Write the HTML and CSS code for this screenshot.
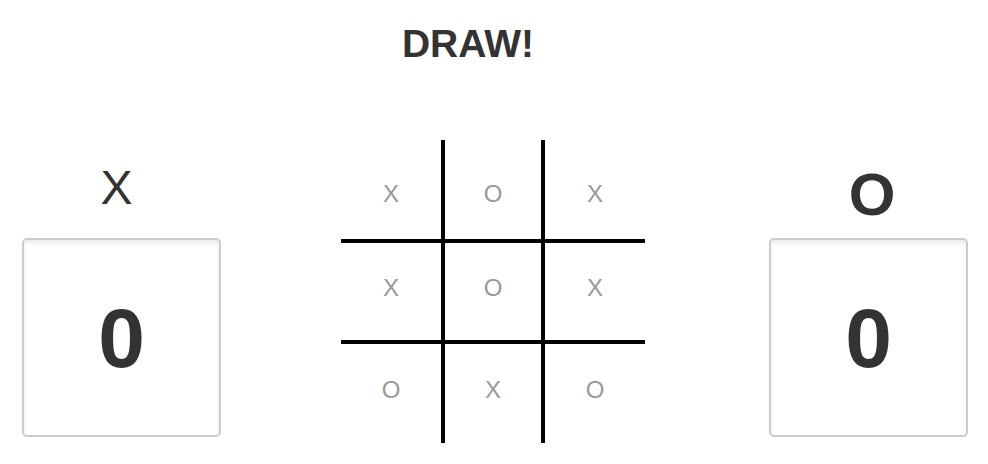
FILE: index.html
```html
<!DOCTYPE html>
<html lang="en">
  <head>
    <meta charset="UTF-8" />
    <meta name="viewport" content="width=device-width, initial-scale=1.0" />
    <title>Tic Tac Toe</title>
    <link rel="stylesheet" href="styles.css">
  </head>
  <body>
    <main class="game">
      <h1 class="status">DRAW!</h1>

      <div class="arena">
        <!-- Игрок X -->
        <div class="player player-x">
          <div class="player-name">X</div>
          <div class="score">0</div>
        </div>

        <!-- Поле -->
        <div class="board">
          <div class="cell row-top">X</div>
          <div class="cell row-top col-mid">O</div>
          <div class="cell row-top">X</div>
          <div class="cell row-mid">X</div>
          <div class="cell row-mid col-mid">O</div>
          <div class="cell row-mid">X</div>
          <div class="cell row-bot">O</div>
          <div class="cell row-bot col-mid">X</div>
          <div class="cell row-bot">O</div>
        </div>

        <!-- Игрок O -->
        <div class="player player-o active">
          <div class="player-name">O</div>
          <div class="score">0</div>
        </div>
      </div>
    </main>
  </body>
</html>
```

FILE: styles.css
```css
/* Общие стили */
body {
  margin: 0;
  padding: 0;
  background-color: #fff;
  color: #333;
  font-family: "Liberation Sans", Arial, sans-serif;
}

.game {
  padding-top: 23px;
}

/* Заголовок со статусом */
.status {
  margin: 0;
  padding-right: 52px;
  font-size: 39px;
  line-height: 42px;
  font-weight: bold;
  text-align: center;
}

/* Ряд: игрок, поле, игрок */
.arena {
  display: flex;
  align-items: flex-start;
  margin-top: 75px;
  padding-left: 22px;
}

.player {
  width: 199px;
  margin-top: 22px;
}

.player-name {
  height: 76px;
  font-size: 48px;
  line-height: 1.1;
  text-align: center;
}

.player-x .player-name {
  padding-right: 10px;
}

.player-o .player-name {
  padding-left: 7px;
}

/* Активный игрок крупнее */
.player.active .player-name {
  font-size: 60px;
  font-weight: bold;
}

.score {
  box-sizing: border-box;
  height: 199px;
  display: flex;
  align-items: center;
  justify-content: center;
  border: 2px solid #ccc;
  border-radius: 5px;
  box-shadow: inset 0 3px 4px rgba(0, 0, 0, 0.08);
  font-size: 84px;
  line-height: 1;
  font-weight: bold;
}

/* Игровое поле */
.board {
  display: grid;
  grid-template-columns: 100px 104px 100px;
  grid-template-rows: 99px 105px 99px;
  margin: 0 124px 0 120px;
}

.cell {
  box-sizing: border-box;
  display: flex;
  align-items: center;
  justify-content: center;
  color: #999;
  font-size: 24px;
  cursor: pointer;
}

.cell.row-top {
  padding-top: 9px;
}

.cell.row-mid {
  border-top: 4px solid #000;
  border-bottom: 4px solid #000;
  padding-bottom: 8px;
}

.cell.row-bot {
  padding-bottom: 8px;
}

.cell.col-mid {
  border-left: 4px solid #000;
  border-right: 4px solid #000;
}
```
